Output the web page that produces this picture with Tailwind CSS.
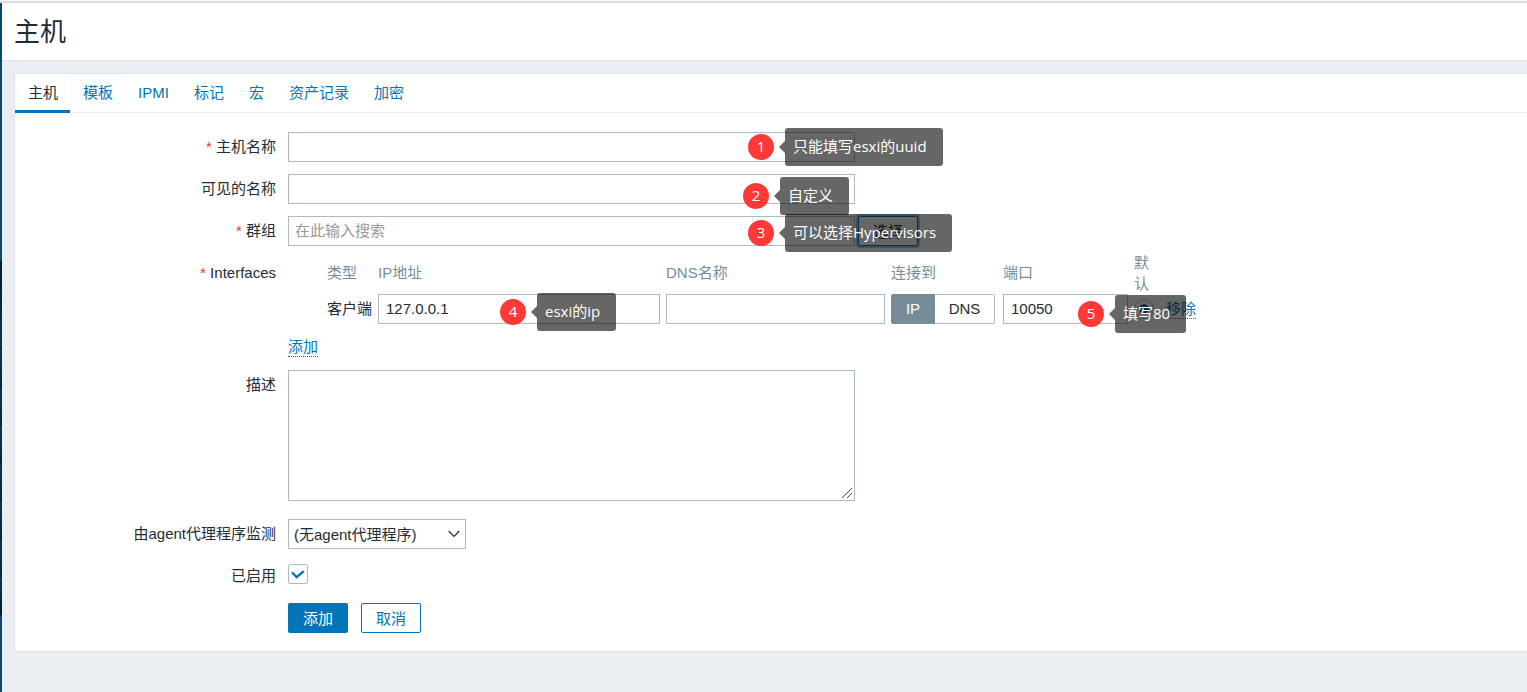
<!DOCTYPE html>
<html lang="zh-CN">
<head>
<meta charset="utf-8">
<title>主机</title>
<script src="https://cdn.jsdelivr.net/npm/@tailwindcss/browser@4"></script>
</head>
<body class="flex min-h-screen flex-col bg-[#ebeef0] font-['Liberation_Sans','Noto_Sans_CJK_SC',sans-serif] text-[15px] leading-[21px] text-[#1f2c33]">
<div class="h-[3px] shrink-0 border-t border-b-2 border-t-white border-b-[#dcdce2]"></div>
<div class="flex grow">
  <aside class="flex w-[2px] shrink-0 flex-col bg-[#0a4873]">
    <div class="h-[258px]"></div>
    <div class="h-[88px] border-b border-[#04101b] bg-linear-to-b from-[#041c2e] to-[#0b3556]"></div>
    <div class="h-[38px] border-b border-[#04101b] bg-linear-to-b from-[#0b3556] to-[#06263f]"></div>
    <div class="h-[38px] border-b border-[#04101b] bg-linear-to-b from-[#0b3556] to-[#06263f]"></div>
    <div class="h-[38px] border-b border-[#04101b] bg-linear-to-b from-[#0b3556] to-[#06263f]"></div>
    <div class="h-[38px] border-b border-[#04101b] bg-linear-to-b from-[#0b3556] to-[#06263f]"></div>
    <div class="h-[38px] border-b border-[#04101b] bg-linear-to-b from-[#0b3556] to-[#06263f]"></div>
    <div class="h-[38px] border-b border-[#04101b] bg-linear-to-b from-[#0b3556] to-[#06263f]"></div>
    <div class="h-[38px] bg-linear-to-b from-[#0b3556] to-[#041c2e]"></div>
  </aside>
  <div class="flex min-w-0 grow flex-col">
    <header class="border-b border-[#dfe4e7] bg-white px-3 pt-3 pb-[11px]">
      <h1 class="text-[26px] leading-[34px]">主机</h1>
    </header>
    <main class="mt-3 ml-3 border border-r-0 border-[#dfe4e7] bg-white pb-[18px]">
      <nav class="flex h-[39px] border-b border-[#ebeef0] leading-[38px] text-[#0275b8]">
        <a href="#host" class="h-[39px] border-b-3 border-[#0275b8] pr-3 pl-[13px] text-[#1f2c33]">主机</a>
        <a href="#templates" class="bg-[#fdfdff] pr-3 pl-[13px]">模板</a>
        <a href="#ipmi" class="pr-3 pl-[13px]">IPMI</a>
        <a href="#tags" class="pr-3 pl-[13px]">标记</a>
        <a href="#macros" class="pr-3 pl-[13px]">宏</a>
        <a href="#inventory" class="pr-3 pl-[13px]">资产记录</a>
        <a href="#encryption" class="pr-3 pl-[13px]">加密</a>
      </nav>
      <form class="grid grid-cols-[261px_1fr] gap-x-3 pt-[19px]">
        <label for="name" class="pt-1 text-right"><span class="text-[#e33734]">*</span> 主机名称</label>
        <div class="relative mb-3 flex">
          <input id="name" type="text" class="h-[30px] w-[567px] border border-[#acbbc2] bg-white px-[7px] pb-px">
          <div class="absolute -top-1 left-[460px] z-10 flex items-center font-['Open_Sans','Noto_Sans_CJK_SC',sans-serif] whitespace-nowrap text-white">
            <span class="mr-[5px] size-[26px] rounded-full bg-[#ff3838] text-center leading-[25px]">1</span>
            <span class="border-y-6 border-r-6 border-y-transparent border-r-black/60"></span>
            <span class="rounded-[3px] bg-black/60 pr-4 pb-[2px] pl-2 leading-[36px]">只能填写esxi的uuid</span>
          </div>
        </div>

        <label for="visible" class="pt-1 text-right">可见的名称</label>
        <div class="relative mb-3 flex">
          <input id="visible" type="text" class="h-[30px] w-[567px] border border-[#acbbc2] bg-white px-[7px] pb-px">
          <div class="absolute top-[3px] left-[455px] z-10 flex items-center font-['Open_Sans','Noto_Sans_CJK_SC',sans-serif] whitespace-nowrap text-white">
            <span class="mr-[5px] size-[26px] rounded-full bg-[#ff3838] text-center leading-[25px]">2</span>
            <span class="border-y-6 border-r-6 border-y-transparent border-r-black/60"></span>
            <span class="rounded-[3px] bg-black/60 pr-4 pb-[2px] pl-2 leading-[36px]">自定义</span>
          </div>
        </div>

        <label for="groups" class="pt-1 text-right"><span class="text-[#e33734]">*</span> 群组</label>
        <div class="relative mb-[6px] flex gap-[3px]">
          <input id="groups" type="text" placeholder="在此输入搜索" class="h-[30px] w-[567px] border border-[#acbbc2] bg-white px-[6px] pb-px placeholder:text-[#999999]">
          <button type="button" class="h-[30px] w-[60px] rounded-[2px] border border-[#0275b8] bg-white text-[#1f2c33] shadow-[0_0_0_2px_#9ac8e3]">选择</button>
          <div class="absolute -top-[2px] left-[460px] z-10 flex items-center font-['Open_Sans','Noto_Sans_CJK_SC',sans-serif] whitespace-nowrap text-white">
            <span class="mr-[5px] size-[26px] rounded-full bg-[#ff3838] text-center leading-[25px]">3</span>
            <span class="border-y-6 border-r-6 border-y-transparent border-r-black/60"></span>
            <span class="rounded-[3px] bg-black/60 pr-4 pb-[2px] pl-2 leading-[36px]">可以选择Hypervisors</span>
          </div>
        </div>

        <span class="pt-[10px] text-right"><span class="text-[#e33734]">*</span> Interfaces</span>
        <div>
          <table class="w-[908px] table-fixed border-collapse text-left">
            <colgroup><col class="w-[39px]"><col class="w-[51px]"><col class="w-[288px]"><col class="w-[225px]"><col class="w-[112px]"><col class="w-[131px]"><col class="w-[32px]"><col class="w-[30px]"></colgroup>
            <thead>
              <tr class="h-[42px] text-[#768d99]">
                <th></th>
                <th class="pb-px font-normal">类型</th>
                <th class="pb-px font-normal">IP地址</th>
                <th class="pb-px font-normal">DNS名称</th>
                <th class="pb-px font-normal">连接到</th>
                <th class="pb-px font-normal">端口</th>
                <th class="pr-3 font-normal">默认</th>
                <th></th>
              </tr>
            </thead>
            <tbody>
              <tr class="h-[30px]">
                <td></td>
                <td class="pb-px">客户端</td>
                <td class="pr-[6px]">
                  <div class="relative">
                    <input type="text" aria-label="IP地址" value="127.0.0.1" class="block h-[30px] w-full border border-[#acbbc2] bg-white px-[7px] pb-px">
                    <div class="absolute -top-px left-[122px] z-10 flex items-center font-['Open_Sans','Noto_Sans_CJK_SC',sans-serif] whitespace-nowrap text-white">
                      <span class="mr-[5px] size-[26px] rounded-full bg-[#ff3838] text-center leading-[25px]">4</span>
                      <span class="border-y-6 border-r-6 border-y-transparent border-r-black/60"></span>
                      <span class="rounded-[3px] bg-black/60 pr-4 pb-[2px] pl-2 leading-[36px]">esxi的ip</span>
                    </div>
                  </div>
                </td>
                <td class="pr-[6px]"><input type="text" aria-label="DNS名称" class="block h-[30px] w-full border border-[#acbbc2] bg-white px-[7px] pb-px"></td>
                <td class="pr-2">
                  <div class="flex h-[30px] text-center leading-[28px]">
                    <button type="button" class="w-11 rounded-l-[2px] border border-[#768d99] bg-[#768d99] text-white">IP</button>
                    <button type="button" class="grow rounded-r-[2px] border border-l-0 border-[#acbbc2] bg-white">DNS</button>
                  </div>
                </td>
                <td class="pr-[6px]">
                  <div class="relative">
                    <input type="text" aria-label="端口" value="10050" class="block h-[30px] w-full border border-[#acbbc2] bg-white px-[7px] pb-px">
                    <div class="absolute top-px left-[75px] z-10 flex items-center font-['Open_Sans','Noto_Sans_CJK_SC',sans-serif] whitespace-nowrap text-white">
                      <span class="mr-[5px] size-[26px] rounded-full bg-[#ff3838] text-center leading-[25px]">5</span>
                      <span class="border-y-6 border-r-6 border-y-transparent border-r-black/60"></span>
                      <span class="rounded-[3px] bg-black/60 pr-4 pb-[2px] pl-2 leading-[36px]">填写80</span>
                    </div>
                  </div>
                </td>
                <td class="pb-px"><input type="radio" checked aria-label="默认" class="block size-5 appearance-none rounded-full border border-[#acbbc2] bg-radial from-[#0275b8] from-35% to-white to-40%"></td>
                <td class="pb-px"><a href="#remove" class="border-b border-dotted border-[#0275b8] pb-px whitespace-nowrap text-[#0275b8]">移除</a></td>
              </tr>
            </tbody>
          </table>
          <div class="mt-3 mb-3 h-[22px]"><a href="#add" class="border-b border-dotted border-[#0275b8] pb-px text-[#0275b8]">添加</a></div>
        </div>

        <label for="description" class="pt-1 text-right">描述</label>
        <textarea id="description" class="mb-[18px] h-[131px] w-[567px] border border-[#acbbc2] bg-white px-[7px] [&::-webkit-resizer]:bg-[linear-gradient(135deg,transparent_46%,#444_47%,#444_53%,transparent_54%,transparent_71%,#444_72%,#444_78%,transparent_79%)] [&::-webkit-resizer]:bg-[length:10px_10px] [&::-webkit-resizer]:bg-[position:3px_3px] [&::-webkit-resizer]:bg-no-repeat"></textarea>

        <label for="proxy" class="pt-1 text-right">由agent代理程序监测</label>
        <div class="mb-[15px] grid w-[178px] items-center">
          <select id="proxy" class="col-start-1 row-start-1 h-[30px] w-full appearance-none border border-[#acbbc2] bg-white px-[5px]"><option>(无agent代理程序)</option></select>
          <svg viewBox="0 0 12 8" class="pointer-events-none col-start-1 row-start-1 mr-[6px] h-2 w-3 justify-self-end" fill="none" stroke="#1f2c33" stroke-width="1.2"><path d="M.7 1 6 6.4 11.3 1"/></svg>
        </div>

        <label for="enabled" class="pt-px text-right">已启用</label>
        <div class="mb-[19px] grid size-5 place-items-center">
          <input id="enabled" type="checkbox" checked class="col-start-1 row-start-1 size-5 appearance-none rounded-[2px] border border-[#acbbc2] bg-white">
          <svg viewBox="0 0 14 10" class="pointer-events-none col-start-1 row-start-1 mt-[2px] h-[10px] w-[14px]" fill="none" stroke="#0275b8" stroke-width="2.4"><path d="M1 2.2 5.6 7.2 12.8 1.2"/></svg>
        </div>

        <div class="col-start-2 flex gap-[13px]">
          <button type="submit" class="h-[30px] w-[60px] rounded-[2px] bg-[#0275b8] text-white">添加</button>
          <button type="button" class="h-[30px] w-[60px] rounded-[2px] border border-[#0275b8] bg-white text-[#0275b8]">取消</button>
        </div>
      </form>
    </main>
  </div>
</div>
</body>
</html>
